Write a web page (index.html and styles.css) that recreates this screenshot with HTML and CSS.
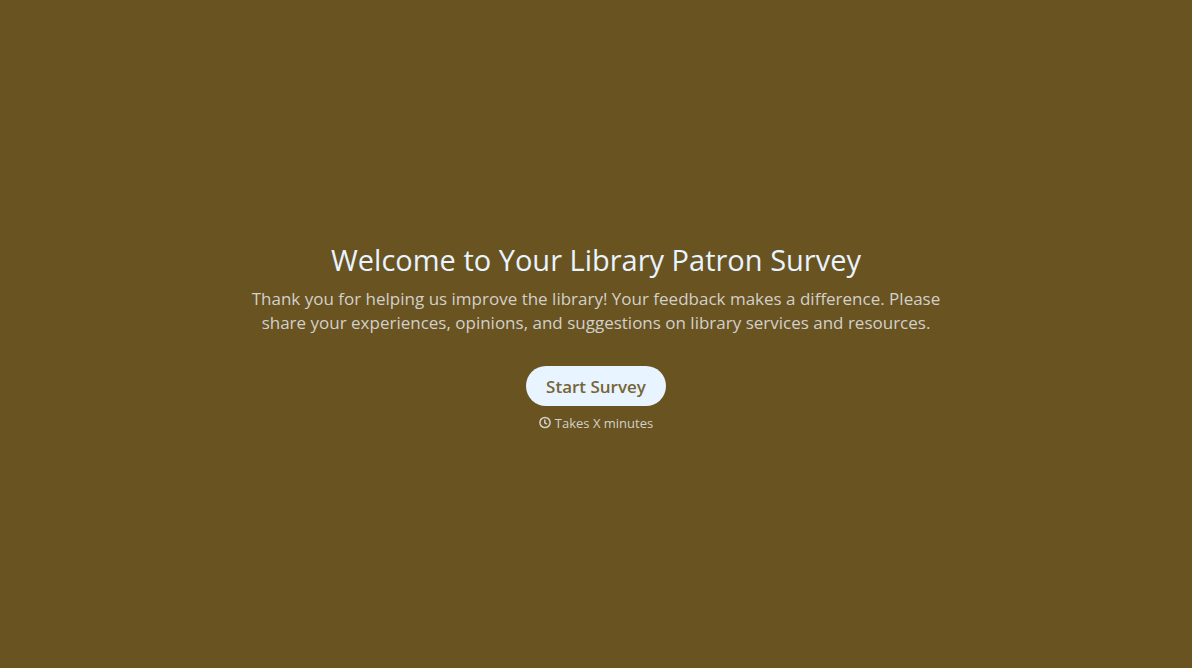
FILE: index.html
```html
<!DOCTYPE html>
<html lang="en">

<head>
    <meta charset="UTF-8">
    <meta name="viewport" content="width=device-width, initial-scale=1.0">
    <title>Library Patron Survey</title>
    <link rel="stylesheet" href="styles.css">
</head>

<body>
    <main class="welcome">
        <h1>Welcome to Your Library Patron Survey</h1>
        <p class="intro">Thank you for helping us improve the library! Your feedback makes a difference. Please share your experiences, opinions, and suggestions on library services and resources.</p>
        <button type="button" class="start">Start Survey</button>
        <div class="time">
            <svg class="clock" viewBox="0 0 12 12" aria-hidden="true">
                <circle cx="6" cy="5.5" r="5.1" />
                <path d="M5.8 2.5V5.8L8 7.2" />
            </svg>
            <span>Takes X minutes</span>
        </div>
    </main>
</body>

</html>
```

FILE: styles.css
```css
body {
    margin: 0;
    min-height: 100vh;
    display: flex;
    align-items: center;
    justify-content: center;
    background-color: #695321;
    color: #d2d0c9;
    font-family: "Segoe UI", "Open Sans", "Noto Sans", sans-serif;
}

.welcome {
    width: 100%;
    max-width: 720px;
    box-sizing: border-box;
    padding: 4px 12px 0;
    display: flex;
    flex-direction: column;
    align-items: center;
    text-align: center;
}

h1 {
    margin: 0 0 7px;
    font-size: 29px;
    font-weight: 400;
    line-height: 40px;
    color: #e8f4ff;
}

.intro {
    margin: 0 0 31px;
    font-size: 17px;
    line-height: 24px;
}

.start {
    height: 40px;
    padding: 0 20px;
    border: none;
    border-radius: 20px;
    background-color: #e8f4ff;
    color: #776438;
    font-family: inherit;
    font-size: 17px;
    font-weight: 600;
    cursor: pointer;
}

.time {
    margin-top: 8px;
    display: flex;
    align-items: center;
    gap: 4px;
    font-size: 13px;
    line-height: 18px;
}

.clock {
    width: 12px;
    height: 12px;
    overflow: visible;
    fill: none;
    stroke: #d2d0c9;
    stroke-width: 1.5;
}
```
